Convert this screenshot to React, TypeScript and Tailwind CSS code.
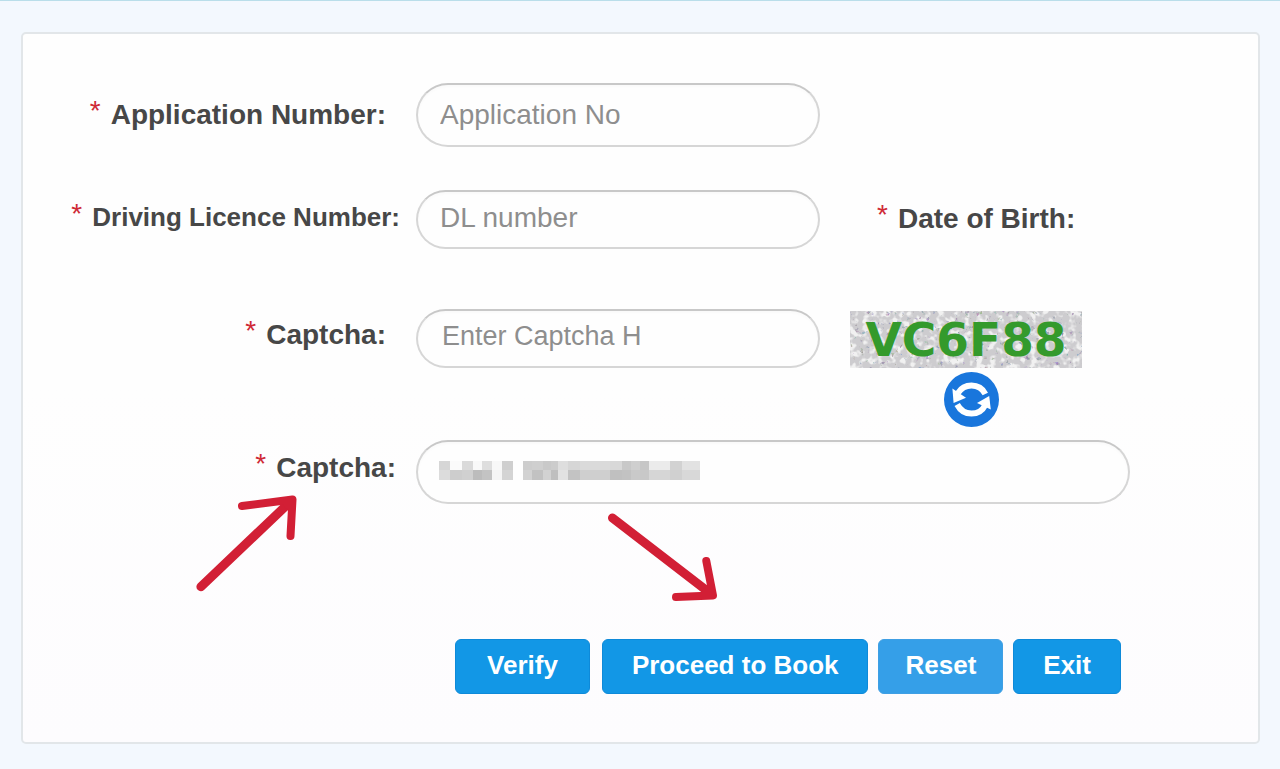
import type { ReactNode } from "react";

const rowGrid = "grid grid-cols-[393fr_404fr_438fr]";
const inputBase =
  "w-full rounded-full border-2 border-[#d6d6d6] border-t-[#c8c8c8] bg-[#fefefe] px-[22px] text-[#333] placeholder:text-[#8e8e8e] placeholder:opacity-100 shadow-[inset_0_2px_3px_rgba(0,0,0,0.02)] outline-none";
const buttonBase =
  "h-[55px] rounded-[6px] border border-[#0e8ad9] text-[26px] leading-[30px] pb-1 font-bold text-white cursor-pointer";

// columns of the masked value: x, width, upper shade, lower shade
const maskCells: [number, number, string, string][] = [
  [0, 11, "#d6d6d6", "#dcdcdc"],
  [11, 12, "#fbfbfb", "#cdcdcd"],
  [23, 11, "#dadada", "#d0d0d0"],
  [34, 9, "#f9f9f9", "#bcbcbc"],
  [43, 10, "#dedede", "#c3c3c3"],
  [53, 10, "#f8f8f8", "#f5f5f5"],
  [63, 11, "#cfcfcf", "#d4d4d4"],
  [84, 9, "#cdcdcd", "#d2d2d2"],
  [93, 11, "#cfcfcf", "#c2c2c2"],
  [104, 8, "#c9c9c9", "#d2d2d2"],
  [112, 7, "#cccccc", "#bfbfbf"],
  [119, 10, "#dedede", "#e2e2e2"],
  [129, 12, "#d6d6d6", "#c3c3c3"],
  [141, 30, "#dadada", "#cfcfcf"],
  [171, 12, "#d8d8d8", "#c0c0c0"],
  [183, 9, "#c8c8c8", "#c2c2c2"],
  [192, 9, "#cfcfcf", "#c9c9c9"],
  [201, 9, "#c6c6c6", "#c8c8c8"],
  [210, 21, "#ebebeb", "#d6d6d6"],
  [231, 12, "#d2d2d2", "#d0d0d0"],
  [243, 18, "#e2e2e2", "#d8d8d8"],
];

function Star() {
  return <span className="mr-[10px] pb-2 text-[28px] font-normal text-[#cf2a36]">*</span>;
}

function FieldLabel({
  htmlFor,
  className,
  children,
}: {
  htmlFor: string;
  className: string;
  children: ReactNode;
}) {
  return (
    <label
      htmlFor={htmlFor}
      className={`flex items-center whitespace-nowrap font-bold text-[#474747] ${className}`}
    >
      <Star />
      {children}
    </label>
  );
}

function RefreshIcon() {
  return (
    <svg viewBox="0 0 55 55" className="h-full w-full" aria-hidden="true">
      <circle cx="27.5" cy="27.5" r="27.5" fill="#1976dc" />
      <path
        d="M14 21 C17.5 15.5 22 13.6 27.5 13.6 C34 13.6 38.5 16.5 41.3 22"
        fill="none"
        stroke="#fff"
        strokeWidth="6"
      />
      <path d="M8.4 16.5 L9.6 31 L22 25.8 Z" fill="#fff" />
      <path
        d="M13.2 32.5 C16.5 38.8 21.5 41.6 27.5 41.6 C33.5 41.6 38 39.5 41 33.5"
        fill="none"
        stroke="#fff"
        strokeWidth="6"
      />
      <path d="M45.2 24 L46.8 37.6 L33 31 Z" fill="#fff" />
    </svg>
  );
}

function CaptchaImage() {
  return (
    <div
      role="img"
      aria-label="Captcha code"
      className="relative flex h-[57px] w-[232px] items-center justify-center overflow-hidden bg-[#cdcccf]"
    >
      <svg className="absolute inset-0 h-full w-full" aria-hidden="true">
        <filter id="grain" x="0" y="0" width="100%" height="100%">
          <feTurbulence type="fractalNoise" baseFrequency="0.2" numOctaves="3" seed="7" />
          <feColorMatrix
            values="0.5 0 0 0 0.15
                    0 0.5 0 0 0.15
                    0 0 0.6 0 0.18
                    0 0 0 -7 2.5"
          />
        </filter>
        <filter id="glints" x="0" y="0" width="100%" height="100%">
          <feTurbulence type="fractalNoise" baseFrequency="0.15" numOctaves="2" seed="21" />
          <feColorMatrix
            values="0 0 0 0 0.88
                    0 0 0 0 0.88
                    0 0 0 0 0.88
                    0 0 0 5 -2.4"
          />
        </filter>
        <rect width="100%" height="100%" filter="url(#glints)" />
        <rect width="100%" height="100%" filter="url(#grain)" />
      </svg>
      <span className="relative font-['DejaVu_Sans',sans-serif] text-[47px] leading-[54px] font-bold text-[#349a2c]">
        VC6F88
      </span>
    </div>
  );
}

export default function App() {
  return (
    <main className="min-h-screen border-t border-[#b9deea] bg-[#f3f8fe] pt-[31px] pr-5 pb-6 pl-[21px] font-['Liberation_Sans',Arial,sans-serif]">
      <form
        onSubmit={(e) => e.preventDefault()}
        className="rounded-[5px] border-2 border-[#e2e6e9] bg-linear-to-b from-[#fefefe] from-50% to-[#fdfcfe] pt-[49px] pb-12"
      >
        {/* Application number */}
        <div className={rowGrid}>
          <FieldLabel htmlFor="application" className="justify-end pr-[30px] text-[28px]">
            Application Number:
          </FieldLabel>
          <input
            id="application"
            type="text"
            placeholder="Application No"
            className={`${inputBase} h-16 text-[28px]`}
          />
        </div>

        {/* Licence number and date of birth */}
        <div className={`${rowGrid} mt-[43px]`}>
          <FieldLabel htmlFor="licence" className="justify-end pr-4 pb-1 text-[26px]">
            Driving Licence Number:
          </FieldLabel>
          <input
            id="licence"
            type="text"
            placeholder="DL number"
            className={`${inputBase} h-[59px] pb-1 text-[28px]`}
          />
          <div className="flex items-center pb-[2px] pl-[57px] text-[28px] font-bold whitespace-nowrap text-[#474747]">
            <Star />
            <span>Date of Birth:</span>
          </div>
        </div>

        {/* Captcha */}
        <div className={`${rowGrid} mt-[60px] items-start`}>
          <FieldLabel htmlFor="captcha" className="h-[59px] justify-end pr-[30px] pb-2 text-[28px]">
            Captcha:
          </FieldLabel>
          <input
            id="captcha"
            type="text"
            placeholder="Enter Captcha H"
            className={`${inputBase} h-[59px] pb-1 pl-6 text-[27px]`}
          />
          <div className="pt-[2px] pl-[30px]">
            <CaptchaImage />
            <button
              type="button"
              aria-label="Refresh captcha"
              className="mt-1 ml-[94px] block h-[55px] w-[55px] cursor-pointer rounded-full"
            >
              <RefreshIcon />
            </button>
          </div>
        </div>

        {/* Second captcha, value masked */}
        <div className={`${rowGrid} mt-[13px]`}>
          <div className="relative flex justify-end">
            <FieldLabel htmlFor="captcha2" className="pr-5 pb-2 text-[28px]">
              Captcha:
            </FieldLabel>
            <svg
              viewBox="196 492 106 102"
              className="pointer-events-none absolute top-[52px] right-[114px] h-[102px] w-[106px]"
              fill="none"
              stroke="#d21f35"
              strokeWidth="8"
              strokeLinecap="round"
              strokeLinejoin="round"
              aria-hidden="true"
            >
              <path strokeWidth="9" d="M200.9 586.7 L290.5 501.5" />
              <path d="M242 506 L292.5 499.5 L290.5 536 M288 505 L292 500" />
            </svg>
          </div>
          <div className="relative col-span-2 mr-32">
            <input id="captcha2" type="text" className={`${inputBase} h-16 text-[28px]`} />
            <svg
              viewBox="0 0 261 19"
              className="pointer-events-none absolute top-[21px] left-[23px] h-[19px] w-[261px]"
              shapeRendering="crispEdges"
              aria-hidden="true"
            >
              {maskCells.map(([x, w, upper, lower]) => (
                <g key={x}>
                  <rect x={x} y="0" width={w} height="9" fill={upper} />
                  <rect x={x} y="9" width={w} height="10" fill={lower} />
                </g>
              ))}
            </svg>
            <svg
              viewBox="606 512 114 92"
              className="pointer-events-none absolute top-[72px] left-[190px] h-[92px] w-[114px]"
              fill="none"
              stroke="#d21f35"
              strokeWidth="8"
              strokeLinecap="round"
              strokeLinejoin="round"
              aria-hidden="true"
            >
              <path strokeWidth="9" d="M612.5 518 L710.5 593.5" />
              <path d="M676 597 L713 595.5 L706.3 561 M706 592 L710 593" />
            </svg>
          </div>
        </div>

        {/* Actions */}
        <div className="mt-[135px] flex justify-end gap-[10px] pr-[137px]">
          <button type="button" className={`${buttonBase} mr-[2px] bg-[#1297e6] px-[31px]`}>
            Verify
          </button>
          <button type="submit" className={`${buttonBase} bg-[#1297e6] px-[29px]`}>
            Proceed to Book
          </button>
          <button type="reset" className={`${buttonBase} border-[#3f9fe4] bg-[#359fe8] px-[26px]`}>
            Reset
          </button>
          <button type="button" className={`${buttonBase} bg-[#1297e6] px-[29px]`}>
            Exit
          </button>
        </div>
      </form>
    </main>
  );
}
